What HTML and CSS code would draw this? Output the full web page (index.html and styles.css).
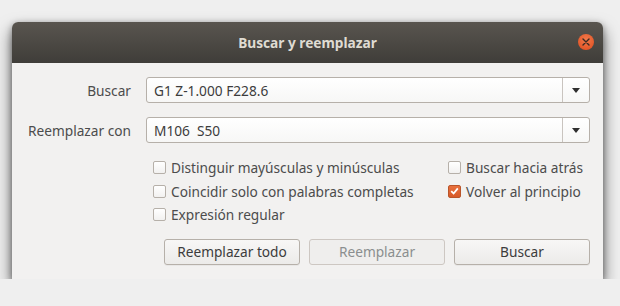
FILE: index.html
```html
<!DOCTYPE html>
<html lang="es">
<head>
    <meta charset="UTF-8">
    <title>Buscar y reemplazar</title>
    <link rel="stylesheet" href="styles.css">
</head>
<body>

    <!-- Dialog window -->
    <div class="window">
        <div class="titlebar">
            <span class="title">Buscar y reemplazar</span>
            <span class="close-btn">
                <svg width="8" height="8" viewBox="0 0 8 8"><path d="M1 1 L7 7 M7 1 L1 7" stroke="#3a2a22" stroke-width="1.4" stroke-linecap="round"/></svg>
            </span>
        </div>

        <div class="dialog-body">
            <div class="fields">
                <label class="field-label">Buscar</label>
                <div class="combo">
                    <span class="combo-text">G1 Z-1.000 F228.6</span>
                    <span class="combo-arrow"></span>
                </div>

                <label class="field-label">Reemplazar con</label>
                <div class="combo">
                    <span class="combo-text">M106&nbsp;&nbsp;S50</span>
                    <span class="combo-arrow"></span>
                </div>
            </div>

            <div class="options">
                <div class="option"><span class="check"></span>Distinguir mayúsculas y minúsculas</div>
                <div class="option"><span class="check"></span>Buscar hacia atrás</div>
                <div class="option"><span class="check"></span>Coincidir solo con palabras completas</div>
                <div class="option"><span class="check checked">
                    <svg width="9" height="8" viewBox="0 0 9 8"><path d="M1.2 4.2 L3.6 6.5 L7.8 1.4" fill="none" stroke="#fff" stroke-width="1.8"/></svg>
                </span>Volver al principio</div>
                <div class="option"><span class="check"></span>Expresión regular</div>
            </div>

            <div class="button-row">
                <button type="button">Reemplazar todo</button>
                <button type="button" disabled>Reemplazar</button>
                <button type="button">Buscar</button>
            </div>
        </div>
    </div>

</body>
</html>
```

FILE: styles.css
```css
/* General Styles */
body {
    font-family: "Noto Sans", "Open Sans", sans-serif;
    font-size: 13.7px;
    margin: 0;
    padding: 22px 0 0 12px;
    background-color: #efefef;
    color: #3c3c3c;
}

/* Window */
.window {
    width: 591px;
    background: #f2f1f0;
    border-radius: 6px 6px 0 0;
    box-shadow: 0 8px 16px rgba(0, 0, 0, 0.6), 0 2px 6px rgba(0, 0, 0, 0.35);
}
.titlebar {
    height: 41px;
    display: flex;
    align-items: center;
    justify-content: center;
    position: relative;
    border-radius: 6px 6px 0 0;
    background: linear-gradient(#59554f, #3f3d39);
}
.title {
    color: #dfdbd2;
    font-weight: bold;
    font-size: 13.7px;
}
.close-btn {
    position: absolute;
    right: 9px;
    top: 12px;
    width: 16px;
    height: 16px;
    border-radius: 50%;
    background: radial-gradient(circle at 50% 35%, #f07a4c, #df4a1b);
    display: flex;
    align-items: center;
    justify-content: center;
}

/* Body */
.dialog-body {
    padding: 14px 13px 14px 14px;
}
.fields {
    display: grid;
    grid-template-columns: 105px 1fr;
    column-gap: 15px;
    row-gap: 14px;
    align-items: center;
}
.field-label {
    text-align: right;
    color: #4c4c4c;
    white-space: nowrap;
}
.combo {
    height: 26px;
    box-sizing: border-box;
    display: flex;
    align-items: center;
    border: 1px solid #b6b0a9;
    border-radius: 3px;
    background: linear-gradient(#ffffff, #f7f7f6);
}
.combo-text {
    flex: 1;
    padding-left: 7px;
    color: #3c3c3c;
}
.combo-arrow {
    width: 26px;
    height: 100%;
    border-left: 1px solid #c9c4bf;
    display: flex;
    align-items: center;
    justify-content: center;
}
.combo-arrow::after {
    content: "";
    border-left: 4.5px solid transparent;
    border-right: 4.5px solid transparent;
    border-top: 5px solid #2f2f2f;
}

/* Options */
.options {
    display: grid;
    grid-template-columns: 295px 1fr;
    padding: 13px 0 0 127px;
}
.option {
    height: 23.5px;
    display: flex;
    align-items: center;
    color: #4c4c4c;
    white-space: nowrap;
}
.check {
    width: 11px;
    height: 11px;
    border: 1px solid #b6b0a9;
    border-radius: 2px;
    background: linear-gradient(#ffffff, #f2f1f0);
    margin-right: 5px;
    display: flex;
    align-items: center;
    justify-content: center;
}
.check.checked {
    border-color: #b9552a;
    background: linear-gradient(#e8703d, #d85a29);
}

/* Buttons */
.button-row {
    display: flex;
    justify-content: flex-end;
    gap: 9px;
    padding-top: 12px;
}
.button-row button {
    width: 136px;
    height: 26px;
    font-family: inherit;
    font-size: 13.7px;
    color: #3c3c3c;
    border: 1px solid #b6b0a9;
    border-radius: 3px;
    background: linear-gradient(#f8f7f6, #ecebe9);
    box-shadow: 0 1px 0 rgba(0, 0, 0, 0.04);
}
.button-row button:disabled {
    color: #8b8e8f;
    border-color: #cdc7c2;
    background: #efeeed;
    box-shadow: none;
}
```
